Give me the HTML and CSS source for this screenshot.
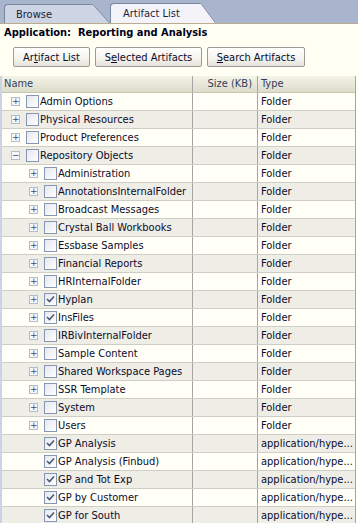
FILE: index.html
```html
<!DOCTYPE html>
<html>
<head>
<meta charset="utf-8">
<link rel="stylesheet" href="styles.css">
</head>
<body>
<div class="page">
  <div class="tabbar">
    <div class="tab tab-off">
      <div class="tab-body">Browse</div>
      <svg class="tab-slant" width="18" height="19" viewBox="0 0 18 19"><polygon points="0,0 1,0 18,19 0,19" fill="#cdd4e3"/><polyline points="0,0.5 1,0.5 17.5,19" fill="none" stroke="#7b879f" stroke-width="1"/></svg>
    </div>
    <div class="tab tab-on">
      <div class="tab-body">Artifact List</div>
      <svg class="tab-slant" width="16" height="20" viewBox="0 0 16 20"><polygon points="0,0 1,0 16,20 0,20" fill="#f3f3f9"/><polyline points="0,0.5 1,0.5 15.5,20" fill="none" stroke="#7b879f" stroke-width="1"/></svg>
    </div>
  </div>
  <div class="content">
    <div class="app-title">Application:&nbsp; Reporting and Analysis</div>
    <div class="buttons">
      <button class="btn b1">Ar<u>t</u>ifact List</button>
      <button class="btn b2">S<u>e</u>lected Artifacts</button>
      <button class="btn b3"><u>S</u>earch Artifacts</button>
    </div>
    <div class="grid">
      <div class="row head">
        <div class="c name">Name</div>
        <div class="c size">Size (KB)</div>
        <div class="c type">Type</div>
      </div>
      <div class="row"><div class="c name l0"><span class="exp">+</span><span class="cb"></span><span class="lbl">Admin Options</span></div><div class="c size"></div><div class="c type">Folder</div></div>
      <div class="row alt"><div class="c name l0"><span class="exp">+</span><span class="cb"></span><span class="lbl">Physical Resources</span></div><div class="c size"></div><div class="c type">Folder</div></div>
      <div class="row"><div class="c name l0"><span class="exp">+</span><span class="cb"></span><span class="lbl">Product Preferences</span></div><div class="c size"></div><div class="c type">Folder</div></div>
      <div class="row alt"><div class="c name l0"><span class="exp minus">&minus;</span><span class="cb"></span><span class="lbl">Repository Objects</span></div><div class="c size"></div><div class="c type">Folder</div></div>
      <div class="row"><div class="c name l1"><span class="exp">+</span><span class="cb"></span><span class="lbl">Administration</span></div><div class="c size"></div><div class="c type">Folder</div></div>
      <div class="row alt"><div class="c name l1"><span class="exp">+</span><span class="cb"></span><span class="lbl">AnnotationsInternalFolder</span></div><div class="c size"></div><div class="c type">Folder</div></div>
      <div class="row"><div class="c name l1"><span class="exp">+</span><span class="cb"></span><span class="lbl">Broadcast Messages</span></div><div class="c size"></div><div class="c type">Folder</div></div>
      <div class="row alt"><div class="c name l1"><span class="exp">+</span><span class="cb"></span><span class="lbl">Crystal Ball Workbooks</span></div><div class="c size"></div><div class="c type">Folder</div></div>
      <div class="row"><div class="c name l1"><span class="exp">+</span><span class="cb"></span><span class="lbl">Essbase Samples</span></div><div class="c size"></div><div class="c type">Folder</div></div>
      <div class="row alt"><div class="c name l1"><span class="exp">+</span><span class="cb"></span><span class="lbl">Financial Reports</span></div><div class="c size"></div><div class="c type">Folder</div></div>
      <div class="row"><div class="c name l1"><span class="exp">+</span><span class="cb"></span><span class="lbl">HRInternalFolder</span></div><div class="c size"></div><div class="c type">Folder</div></div>
      <div class="row alt"><div class="c name l1"><span class="exp">+</span><span class="cb on"><svg width="11" height="11" viewBox="0 0 11 11"><polyline points="2,5 4.5,7.5 9,2.5" fill="none" stroke="#4a5775" stroke-width="1.6"/></svg></span><span class="lbl">Hyplan</span></div><div class="c size"></div><div class="c type">Folder</div></div>
      <div class="row"><div class="c name l1"><span class="exp">+</span><span class="cb on"><svg width="11" height="11" viewBox="0 0 11 11"><polyline points="2,5 4.5,7.5 9,2.5" fill="none" stroke="#4a5775" stroke-width="1.6"/></svg></span><span class="lbl">InsFiles</span></div><div class="c size"></div><div class="c type">Folder</div></div>
      <div class="row alt"><div class="c name l1"><span class="exp">+</span><span class="cb"></span><span class="lbl">IRBivInternalFolder</span></div><div class="c size"></div><div class="c type">Folder</div></div>
      <div class="row"><div class="c name l1"><span class="exp">+</span><span class="cb"></span><span class="lbl">Sample Content</span></div><div class="c size"></div><div class="c type">Folder</div></div>
      <div class="row alt"><div class="c name l1"><span class="exp">+</span><span class="cb"></span><span class="lbl">Shared Workspace Pages</span></div><div class="c size"></div><div class="c type">Folder</div></div>
      <div class="row"><div class="c name l1"><span class="exp">+</span><span class="cb"></span><span class="lbl">SSR Template</span></div><div class="c size"></div><div class="c type">Folder</div></div>
      <div class="row alt"><div class="c name l1"><span class="exp">+</span><span class="cb"></span><span class="lbl">System</span></div><div class="c size"></div><div class="c type">Folder</div></div>
      <div class="row"><div class="c name l1"><span class="exp">+</span><span class="cb"></span><span class="lbl">Users</span></div><div class="c size"></div><div class="c type">Folder</div></div>
      <div class="row alt"><div class="c name l1"><span class="exp blank"></span><span class="cb on"><svg width="11" height="11" viewBox="0 0 11 11"><polyline points="2,5 4.5,7.5 9,2.5" fill="none" stroke="#4a5775" stroke-width="1.6"/></svg></span><span class="lbl">GP Analysis</span></div><div class="c size"></div><div class="c type">application/hype...</div></div>
      <div class="row"><div class="c name l1"><span class="exp blank"></span><span class="cb on"><svg width="11" height="11" viewBox="0 0 11 11"><polyline points="2,5 4.5,7.5 9,2.5" fill="none" stroke="#4a5775" stroke-width="1.6"/></svg></span><span class="lbl">GP Analysis (Finbud)</span></div><div class="c size"></div><div class="c type">application/hype...</div></div>
      <div class="row alt"><div class="c name l1"><span class="exp blank"></span><span class="cb on"><svg width="11" height="11" viewBox="0 0 11 11"><polyline points="2,5 4.5,7.5 9,2.5" fill="none" stroke="#4a5775" stroke-width="1.6"/></svg></span><span class="lbl">GP and Tot Exp</span></div><div class="c size"></div><div class="c type">application/hype...</div></div>
      <div class="row"><div class="c name l1"><span class="exp blank"></span><span class="cb on"><svg width="11" height="11" viewBox="0 0 11 11"><polyline points="2,5 4.5,7.5 9,2.5" fill="none" stroke="#4a5775" stroke-width="1.6"/></svg></span><span class="lbl">GP by Customer</span></div><div class="c size"></div><div class="c type">application/hype...</div></div>
      <div class="row alt"><div class="c name l1"><span class="exp blank"></span><span class="cb on"><svg width="11" height="11" viewBox="0 0 11 11"><polyline points="2,5 4.5,7.5 9,2.5" fill="none" stroke="#4a5775" stroke-width="1.6"/></svg></span><span class="lbl">GP for South</span></div><div class="c size"></div><div class="c type">application/hype...</div></div>
    </div>
  </div>
</div>
</body>
</html>
```
FILE: styles.css
```css
* { box-sizing: border-box; }
html, body { margin: 0; padding: 0; }
body {
  width: 358px;
  height: 523px;
  overflow: hidden;
  background: #fffff4;
  font-family: "DejaVu Sans Condensed", "DejaVu Sans", sans-serif;
  font-size: 11px;
  color: #0b0b2b;
}
.page { width: 358px; }

.tabbar {
  height: 24px;
  background: #a8b5cd;
  display: flex;
  align-items: flex-end;
  padding-left: 4px;
  border-bottom: 1px solid #b9ab8c;
}
.tab { display: flex; align-items: flex-end; }
.tab-body {
  border-left: 1px solid #7b879f;
  border-top: 1px solid #7b879f;
  border-top-left-radius: 4px;
  line-height: 17px;
  color: #1b1f3a;
}
.tab-off .tab-body {
  width: 88px;
  height: 19px;
  padding-left: 11px;
  padding-top: 1px;
  background: #cdd4e3;
}
.tab-on .tab-body {
  width: 90px;
  height: 20px;
  padding-left: 12px;
  padding-top: 1px;
  background: #f3f3f9;
}
.tab-slant { display: block; }

.content { background: #fffff4; }
.app-title {
  font-weight: bold;
  padding: 1px 4px 0;
  height: 17px;
  line-height: 15px;
  color: #000018;
}
.buttons {
  display: flex;
  gap: 5px;
  padding-left: 13px;
  margin-top: 6px;
  height: 20px;
}
.btn {
  font: inherit;
  color: #0b0b2b;
  height: 20px;
  padding: 0;
  border: 1px solid #9a9a9a;
  border-radius: 2px;
  background: linear-gradient(#ffffff, #f4f3ee 60%, #e4e2d8);
  line-height: 17px;
}
.btn u { text-decoration: underline; text-underline-offset: 1px; }
.b1 { width: 77px; }
.b2 { width: 107px; }
.b3 { width: 98px; }

.grid {
  margin-top: 9px;
  width: 356px;
  border-left: 2px solid #cdd2e6;
  border-right: 1px solid #a4a4a4;
}
.row {
  display: grid;
  grid-template-columns: 191px 65px 97px;
  height: 18px;
  background: #fffff7;
  border-bottom: 1px solid #cfcec6;
}
.row.alt { background: #eeede6; }
.row.head {
  height: 17px;
  background: linear-gradient(#f4f3e8, #dcdccb);
  border-bottom: 1px solid #c6c5b4;
}
.c {
  overflow: hidden;
  white-space: nowrap;
  line-height: 17px;
  border-right: 1px solid #a4a4a4;
}
.c.type { border-right: none; padding-left: 3px; }
.c.size { text-align: right; padding-right: 5px; }
.head .c { color: #33405c; line-height: 16px; }
.head .name { padding-left: 2px; }
.name { display: flex; align-items: center; }
.head .name { display: block; }
.l0 { padding-left: 9px; }
.l1 { padding-left: 27px; }
.exp {
  flex: none;
  width: 9px;
  height: 9px;
  border: 1px solid #b3bbcc;
  background: #f7f8fb;
  color: #3e4d6e;
  font-size: 9px;
  line-height: 7px;
  text-align: center;
  margin-right: 6px;
  font-family: "DejaVu Sans", sans-serif;
}
.exp.blank { border: none; background: none; }
.cb {
  flex: none;
  width: 13px;
  height: 13px;
  border: 1px solid #8796b3;
  background: linear-gradient(135deg, #e6e8ef, #ffffff);
  margin-right: 1px;
  display: flex;
  align-items: center;
  justify-content: center;
}
.cb svg { display: block; }
.lbl { white-space: nowrap; }
```
